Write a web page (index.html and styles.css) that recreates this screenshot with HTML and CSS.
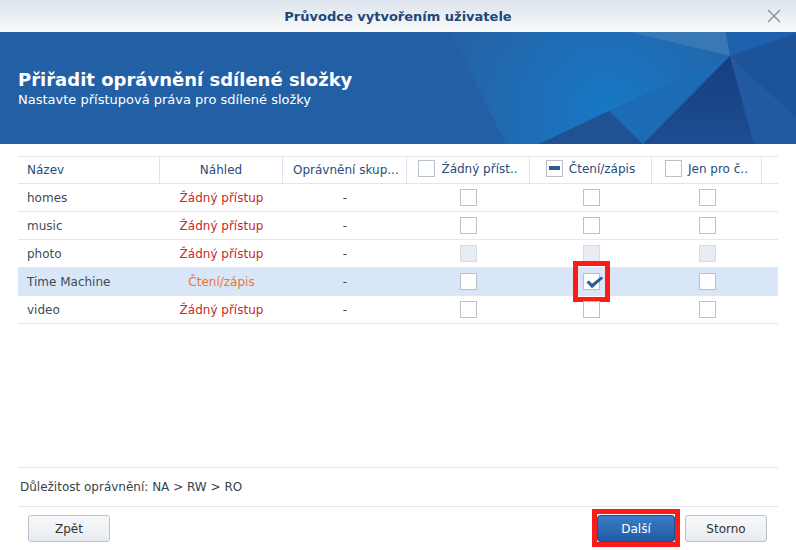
FILE: index.html
```html
<!DOCTYPE html>
<html lang="cs">
<head>
    <meta charset="UTF-8">
    <meta name="viewport" content="width=device-width, initial-scale=1.0">
    <title>Průvodce vytvořením uživatele</title>
    <link rel="stylesheet" href="styles.css">
</head>
<body>

<div class="dialog">
    <div class="titlebar">
        <span></span>
        <h1 class="title">Průvodce vytvořením uživatele</h1>
        <svg class="close" width="14" height="14" viewBox="0 0 14 14">
            <path d="M1 1 L13 13 M13 1 L1 13" stroke="#8b9096" stroke-width="1.4" fill="none"/>
        </svg>
    </div>

    <div class="banner">
        <svg class="banner-art" viewBox="0 0 796 112" preserveAspectRatio="none">
            <defs>
                <radialGradient id="glow" cx="606" cy="78" r="160" gradientUnits="userSpaceOnUse">
                    <stop offset="0" stop-color="#1878c4"/>
                    <stop offset="1" stop-color="#2562a7"/>
                </radialGradient>
                <linearGradient id="dark" x1="0" y1="0" x2="0" y2="1">
                    <stop offset="0" stop-color="#163f80"/>
                    <stop offset="1" stop-color="#1d4d91"/>
                </linearGradient>
                <linearGradient id="left" x1="0" y1="0" x2="1" y2="0">
                    <stop offset="0" stop-color="#2460a5"/>
                    <stop offset="1" stop-color="#225ea3"/>
                </linearGradient>
            </defs>
            <rect width="796" height="112" fill="url(#left)"/>
            <polygon points="451,0 629,0 730,24 609,79 539,112 506,112" fill="url(#glow)"/>
            <polygon points="539,112 609,79 643,112" fill="#1f5293"/>
            <polygon points="609,79 730,24 643,112" fill="#1c6cb5"/>
            <polygon points="730,24 754,112 643,112" fill="url(#dark)"/>
            <polygon points="629,0 726,0 730,24" fill="#3879b5"/>
            <polygon points="726,0 796,0 796,2 730,24" fill="#1d60ab"/>
            <polygon points="730,24 796,2 796,86" fill="#1d5398"/>
            <polygon points="730,24 796,86 796,112 754,112" fill="#2259a0"/>
        </svg>
        <div class="banner-text">
            <h2>Přiřadit oprávnění sdílené složky</h2>
            <p>Nastavte přístupová práva pro sdílené složky</p>
        </div>
    </div>

    <div class="grid-wrap">
        <table class="grid">
            <colgroup>
                <col style="width: 142px">
                <col style="width: 123px">
                <col style="width: 124px">
                <col style="width: 123px">
                <col style="width: 122px">
                <col style="width: 110px">
                <col style="width: 16px">
            </colgroup>
            <thead>
                <tr>
                    <th class="name">Název</th>
                    <th>Náhled</th>
                    <th class="left">Oprávnění skup...</th>
                    <th><span class="hcb"><span class="cb"></span>Žádný příst..</span></th>
                    <th><span class="hcb"><span class="cb partial"></span>Čtení/zápis</span></th>
                    <th><span class="hcb"><span class="cb"></span>Jen pro č..</span></th>
                    <th class="last"></th>
                </tr>
            </thead>
            <tbody>
                <tr>
                    <td class="name">homes</td>
                    <td class="na">Žádný přístup</td>
                    <td>-</td>
                    <td><span class="cb"></span></td>
                    <td><span class="cb"></span></td>
                    <td><span class="cb"></span></td>
                    <td></td>
                </tr>
                <tr>
                    <td class="name">music</td>
                    <td class="na">Žádný přístup</td>
                    <td>-</td>
                    <td><span class="cb"></span></td>
                    <td><span class="cb"></span></td>
                    <td><span class="cb"></span></td>
                    <td></td>
                </tr>
                <tr>
                    <td class="name">photo</td>
                    <td class="na">Žádný přístup</td>
                    <td>-</td>
                    <td><span class="cb disabled"></span></td>
                    <td><span class="cb disabled"></span></td>
                    <td><span class="cb disabled"></span></td>
                    <td></td>
                </tr>
                <tr class="selected">
                    <td class="name">Time Machine</td>
                    <td class="rw">Čtení/zápis</td>
                    <td>-</td>
                    <td><span class="cb"></span></td>
                    <td>
                        <span class="cb marked">
                            <svg width="20" height="17" viewBox="0 0 20 17">
                                <path d="M2.5 8.2 L5 6.4 L8 9.8 L17.2 2.4 L19.2 4.2 L8 14.2 Z" fill="#2b5a95"/>
                            </svg>
                        </span>
                    </td>
                    <td><span class="cb"></span></td>
                    <td></td>
                </tr>
                <tr>
                    <td class="name">video</td>
                    <td class="na">Žádný přístup</td>
                    <td>-</td>
                    <td><span class="cb"></span></td>
                    <td><span class="cb"></span></td>
                    <td><span class="cb"></span></td>
                    <td></td>
                </tr>
            </tbody>
        </table>
    </div>

    <div class="note">Důležitost oprávnění: NA &gt; RW &gt; RO</div>

    <div class="actions">
        <button class="btn">Zpět</button>
        <button class="btn primary highlight">Další</button>
        <button class="btn">Storno</button>
    </div>
</div>

</body>
</html>
```

FILE: styles.css
```css
:root {
    --text: #414b55;
    --head-text: #284b79;
    --line: #e4e8ed;
    --cb-border: #b7c1cc;
    --mark: #ff1a1a;
}

html, body {
    margin: 0;
    padding: 0;
    background: #fff;
}

body {
    font-family: "DejaVu Sans", Verdana, sans-serif;
    font-size: 12px;
    color: var(--text);
}

.dialog {
    height: 550px;
    display: flex;
    flex-direction: column;
}

/* title bar */
.titlebar {
    height: 32px;
    flex: none;
    display: grid;
    grid-template-columns: 1fr auto 1fr;
    align-items: center;
    background: linear-gradient(#dce3ec, #fafbfc);
}

.title {
    margin: 0;
    font-size: 13px;
    font-weight: bold;
    color: #21487b;
}

.close {
    justify-self: end;
    margin-right: 15px;
}

/* banner */
.banner {
    position: relative;
    height: 112px;
    flex: none;
    display: flex;
    flex-direction: column;
    justify-content: center;
    padding-left: 18px;
    color: #fff;
    overflow: hidden;
}

.banner-art {
    position: absolute;
    top: 0;
    left: 0;
    width: 100%;
    height: 100%;
}

.banner-text {
    position: relative;
}

.banner-text h2 {
    margin: 0;
    font-size: 18px;
    line-height: 22px;
    font-weight: bold;
}

.banner-text p {
    margin: 1px 0 0;
    font-size: 13px;
    line-height: 16px;
}

/* grid */
.grid-wrap {
    flex: 1;
    padding: 12px 18px 0;
}

.grid {
    width: 760px;
    table-layout: fixed;
    border-collapse: separate;
    border-spacing: 0;
    border-top: 1px solid var(--line);
}

.grid th,
.grid td {
    box-sizing: border-box;
    padding: 0 6px;
    text-align: center;
    white-space: nowrap;
    border-bottom: 1px solid var(--line);
}

.grid th {
    height: 27px;
    overflow: hidden;
    font-weight: normal;
    color: var(--head-text);
    border-right: 1px solid #d7e4f1;
    border-bottom-color: #dfe6ee;
}

.grid th.last {
    border-right: none;
}

.grid td {
    height: 28px;
}

.grid .name {
    text-align: left;
    padding-left: 9px;
}

.grid th.left {
    text-align: left;
    padding-left: 10px;
}

.grid td.na {
    color: #c42a2d;
}

.grid td.rw {
    color: #e9782c;
}

.grid tr.selected td {
    background: #d9e6f8;
}

.hcb {
    display: inline-flex;
    align-items: center;
    gap: 6px;
}

/* checkboxes */
.cb {
    position: relative;
    display: inline-block;
    box-sizing: border-box;
    width: 17px;
    height: 17px;
    vertical-align: middle;
    border: 1px solid var(--cb-border);
    background: #fff;
}

.cb.disabled {
    background: #e8edf4;
    border-color: #d4dce5;
}

.cb.partial::before {
    content: "";
    position: absolute;
    left: 2px;
    top: 5px;
    width: 11px;
    height: 4px;
    background: #2d5a94;
}

.cb svg {
    position: absolute;
    left: 0;
    top: 0;
    overflow: visible;
}

.cb.marked::after {
    content: "";
    position: absolute;
    left: -11px;
    top: -13px;
    width: 37px;
    height: 41px;
    box-sizing: border-box;
    border: 5px solid var(--mark);
}

/* footer */
.note {
    flex: none;
    height: 40px;
    box-sizing: border-box;
    margin: 0 18px;
    padding-left: 2px;
    line-height: 38px;
    color: #3a4148;
    border-top: 1px solid var(--line);
    border-bottom: 1px solid var(--line);
}

.actions {
    flex: none;
    height: 43px;
    box-sizing: border-box;
    display: flex;
    gap: 10px;
    padding: 8px 29px 0 28px;
}

.btn {
    box-sizing: border-box;
    width: 82px;
    height: 27px;
    font-family: inherit;
    font-size: 12px;
    color: #333;
    background: linear-gradient(#f8f9fb, #e7ebef);
    border: 1px solid #b8c2cc;
    border-radius: 3px;
}

.btn.primary {
    position: relative;
    width: 78px;
    margin-left: auto;
    color: #fff;
    background: linear-gradient(#3b7bc6, #1f5ca6);
    border-color: #1d5196;
}

.btn.highlight::after {
    content: "";
    position: absolute;
    top: -7px;
    left: -6px;
    right: -6px;
    bottom: -6px;
    border: 5px solid var(--mark);
}
```
